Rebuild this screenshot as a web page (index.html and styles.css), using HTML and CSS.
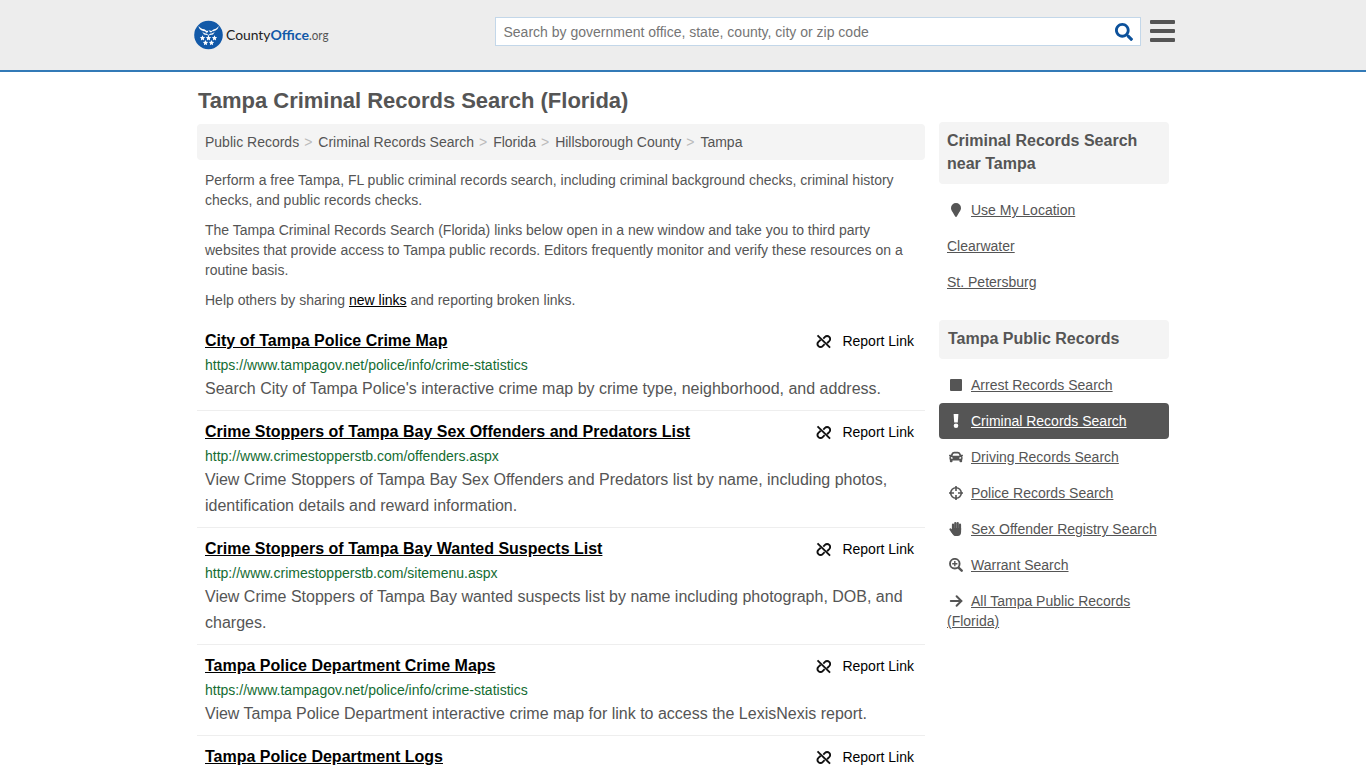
FILE: index.html
```html
<!DOCTYPE html>
<html lang="en">
<head>
<meta charset="utf-8">
<title>Tampa Criminal Records Search (Florida)</title>
<link rel="stylesheet" href="styles.css">
</head>
<body>
<svg width="0" height="0" class="defs">
  <symbol id="unlink" viewBox="0 0 16 16"><g fill="none" stroke="#111" stroke-width="2"><path d="M1.600 1.400 15 14.600"/><path d="M7.800 5 9.600 3.100a3.100 3.100 0 0 1 4.500 0 3.300 3.300 0 0 1 0 4.500L11.800 9.900M9.200 10.800l-2.100 2.100a3.100 3.100 0 0 1-4.500 0 3.300 3.300 0 0 1 0-4.500L5 6.100"/></g></symbol>
</svg>
<header class="header">
  <div class="header-inner">
    <a class="logo">
      <svg width="144" height="30" viewBox="0 0 144 30">
        <circle cx="14.500" cy="15" r="14.300" fill="#1259a8"/>
        <path fill="#fff" d="M4.500 6c.5 3.500 3.300 5 6.500 5.300l1.200 1.400 1.700-.5.3-1.700 1-.3.500 1.900 1.500.5 1.100-1.300c3.200-.3 5.900-1.800 6.400-5.300-1.400 2-2.900 2.900-4.800 3.300l-2.500 1.700-2.300-.8-2.200.8-2.600-1.700C7.800 8.900 6 7.900 4.500 6zM8 11.500c1.500 1.500 3 2 4.300 2l2.200 1.500 2.200-1.500c1.300 0 2.800-.5 4.300-2l-2 3-3.100.5-1.400.8-1.400-.8-3.100-.5z"/>
        <g fill="#fff">
          <path id="star" d="m8.500 15.300.8 1.700 1.900.3-1.400 1.300.3 1.900-1.600-.9-1.600.9.3-1.900-1.400-1.300 1.900-.3z"/>
          <use href="#star" x="6"/><use href="#star" x="12"/><use href="#star" x="3" y="4.700"/><use href="#star" x="9" y="4.700"/>
        </g>
        <g class="logo-text"><text x="32" y="20" textLength="44.500" lengthAdjust="spacingAndGlyphs" fill="#222">County</text><text class="logo-bold" x="76.500" y="20" textLength="38.500" lengthAdjust="spacingAndGlyphs">Office</text><text class="logo-org" x="115" y="20" textLength="19.500" lengthAdjust="spacingAndGlyphs">.org</text></g>
      </svg>
    </a>
    <div class="search">
      <span>Search by government office, state, county, city or zip code</span>
      <svg width="18" height="18" viewBox="0 0 512 512" fill="#0c519b"><path d="M505 442.700L405.300 343c-4.500-4.500-10.600-7-17-7H372c27.600-35.300 44-79.700 44-128C416 93.100 322.900 0 208 0S0 93.100 0 208s93.100 208 208 208c48.300 0 92.700-16.400 128-44v16.300c0 6.400 2.500 12.500 7 17l99.700 99.700c9.400 9.400 24.600 9.400 33.900 0l28.300-28.300c9.400-9.400 9.400-24.600.1-34zM208 336c-70.700 0-128-57.200-128-128 0-70.700 57.200-128 128-128 70.700 0 128 57.200 128 128 0 70.700-57.200 128-128 128z"/></svg>
    </div>
    <div class="menu"><i></i><i></i><i></i></div>
  </div>
</header>
<div class="page">
  <main class="main">
    <h1>Tampa Criminal Records Search (Florida)</h1>
    <nav class="crumbs"><a>Public Records</a><i>&gt;</i><a>Criminal Records Search</a><i>&gt;</i><a>Florida</a><i>&gt;</i><a>Hillsborough County</a><i>&gt;</i><a>Tampa</a></nav>
    <div class="intro">
      <p>Perform a free Tampa, FL public criminal records search, including criminal background checks, criminal history<br>checks, and public records checks.</p>
      <p>The Tampa Criminal Records Search (Florida) links below open in a new window and take you to third party<br>websites that provide access to Tampa public records. Editors frequently monitor and verify these resources on a<br>routine basis.</p>
      <p>Help others by sharing <a>new links</a> and reporting broken links.</p>
    </div>
    <section class="item">
      <div class="top"><h2>City of Tampa Police Crime Map</h2><a class="report"><svg width="15" height="15"><use href="#unlink"/></svg>Report Link</a></div>
      <div class="url">https://www.tampagov.net/police/info/crime-statistics</div>
      <div class="desc">Search City of Tampa Police's interactive crime map by crime type, neighborhood, and address.</div>
    </section>
    <section class="item">
      <div class="top"><h2>Crime Stoppers of Tampa Bay Sex Offenders and Predators List</h2><a class="report"><svg width="15" height="15"><use href="#unlink"/></svg>Report Link</a></div>
      <div class="url">http://www.crimestopperstb.com/offenders.aspx</div>
      <div class="desc">View Crime Stoppers of Tampa Bay Sex Offenders and Predators list by name, including photos,<br>identification details and reward information.</div>
    </section>
    <section class="item">
      <div class="top"><h2>Crime Stoppers of Tampa Bay Wanted Suspects List</h2><a class="report"><svg width="15" height="15"><use href="#unlink"/></svg>Report Link</a></div>
      <div class="url">http://www.crimestopperstb.com/sitemenu.aspx</div>
      <div class="desc">View Crime Stoppers of Tampa Bay wanted suspects list by name including photograph, DOB, and<br>charges.</div>
    </section>
    <section class="item">
      <div class="top"><h2>Tampa Police Department Crime Maps</h2><a class="report"><svg width="15" height="15"><use href="#unlink"/></svg>Report Link</a></div>
      <div class="url">https://www.tampagov.net/police/info/crime-statistics</div>
      <div class="desc">View Tampa Police Department interactive crime map for link to access the LexisNexis report.</div>
    </section>
    <section class="item">
      <div class="top"><h2>Tampa Police Department Logs</h2><a class="report"><svg width="15" height="15"><use href="#unlink"/></svg>Report Link</a></div>
    </section>
  </main>
  <aside class="side">
    <h3>Criminal Records Search<br>near Tampa</h3>
    <ul>
      <li><svg class="ico" viewBox="0 0 18 14"><path d="M9 0a5 5 0 0 1 5 5c0 2.200-1.300 3.400-4.200 8.400a.9.9 0 0 1-1.600 0C5.300 8.400 4 7.200 4 5a5 5 0 0 1 5-5z"/></svg><a>Use My Location</a></li>
      <li><a>Clearwater</a></li>
      <li><a>St. Petersburg</a></li>
    </ul>
    <h3 class="second">Tampa Public Records</h3>
    <ul>
      <li><svg class="ico" viewBox="0 0 18 14"><rect x="3" y="1" width="12" height="12" rx="1"/></svg><a>Arrest Records Search</a></li>
      <li class="active"><svg class="ico" viewBox="0 0 18 14"><path d="M6.600 0h4.800l-.6 8.500H7.200z"/><circle cx="9" cy="11.700" r="2.300"/></svg><a>Criminal Records Search</a></li>
      <li><svg class="ico" viewBox="-73 0 658 512"><path d="M499.990 176h-59.870l-16.640-41.600C406.380 91.630 365.570 64 319.500 64h-127c-46.060 0-86.880 27.630-103.990 70.400L71.870 176H12.010C4.200 176-1.530 183.340.37 190.910l6 24C7.700 220.250 12.500 224 18.010 224h20.070C24.650 235.730 16 252.780 16 272v48c0 16.120 6.160 30.670 16 41.930V416c0 17.670 14.330 32 32 32h32c17.670 0 32-14.330 32-32v-32h256v32c0 17.670 14.330 32 32 32h32c17.670 0 32-14.330 32-32v-54.070c9.840-11.250 16-25.800 16-41.930v-48c0-19.220-8.650-36.270-22.070-48H494c5.510 0 10.310-3.750 11.640-9.090l6-24c1.890-7.570-3.840-14.910-11.650-14.910zm-352.060-17.830c7.290-18.220 24.940-30.170 44.570-30.170h127c19.630 0 37.280 11.950 44.570 30.170L384 208H128l19.930-49.830zM96 319.800c-19.200 0-32-12.760-32-31.900S76.800 256 96 256s48 28.710 48 47.850-28.800 15.950-48 15.950zm320 0c-19.200 0-48 3.190-48-15.950S396.800 256 416 256s32 12.760 32 31.900-12.800 31.900-32 31.900z"/></svg><a>Driving Records Search</a></li>
      <li><svg class="ico" viewBox="0 0 18 14"><g fill="none" stroke="#555" stroke-width="1.600"><circle cx="9" cy="7" r="5.300"/><path d="M9 0v5M9 9v5M2 7h5M11 7H16"/></g></svg><a>Police Records Search</a></li>
      <li><svg class="ico" viewBox="0 0 18 14"><path stroke="#555" stroke-width="2.200" stroke-linecap="round" d="M6 7.500V2.600M8.300 7V1.100M10.700 7V1.100M13 8V2.700M3.500 7.300l2.700 3.500"/><path d="M5.200 6h8.900v4c0 2.500-1.200 4-3.500 4H8.500c-1.300 0-2-.7-2.800-1.800L3.600 9l1.600.3z"/></svg><a>Sex Offender Registry Search</a></li>
      <li><svg class="ico" viewBox="0 0 18 14"><g fill="none" stroke="#555"><circle cx="7.800" cy="5.700" r="4.800" stroke-width="1.900"/><path stroke-width="2.400" stroke-linecap="round" d="m11.800 9.800 2.900 2.900"/><path stroke-width="1.400" d="M5.200 5.700h5.200M7.800 3.100v5.200"/></g></svg><a>Warrant Search</a></li>
      <li><svg class="ico" viewBox="0 0 18 14"><path fill="none" stroke="#555" stroke-width="2" stroke-linecap="round" d="M3.800 7h10.200M9.600 2.200 14.400 7l-4.800 4.800"/></svg><a>All Tampa Public Records<br>(Florida)</a></li>
    </ul>
  </aside>
</div>
</body>
</html>
```
FILE: styles.css
```css
* { box-sizing: border-box; }
html { overflow: hidden; }
body { margin: 0; background: #fff; color: #555; font: 14px/20px "Liberation Sans", Arial, sans-serif; height: 768px; overflow: hidden; }
.defs { display: none; }
.header { height: 72px; background: #ededed; border-bottom: 2px solid #337ab7; }
.header-inner { width: 981px; margin-left: 194px; display: flex; align-items: flex-start; }
.logo { width: 301px; padding-top: 20px; }
.logo svg, .search svg { display: block; }
.logo svg { overflow: visible; }
.logo-text { font: 13.5px Lato, sans-serif; }
.logo-bold { font-weight: 700; fill: #1259a8; }
.logo-org { fill: #555; }
.search { width: 646px; height: 29px; margin-top: 17px; padding: 0 7px 0 7.5px; background: #fff; border: 1px solid #c3d7e9; display: flex; align-items: center; justify-content: space-between; color: #757575; }
.menu { width: 25px; margin: 20px 0 0 9px; display: grid; gap: 5px; }
.menu i { height: 4px; background: #555; border-radius: 1px; }
.page { width: 972px; margin-left: 197px; display: flex; gap: 14px; align-items: flex-start; }
.main { width: 728px; }
h1 { margin: 0; padding: 16px 0 11px 1px; font-size: 22px; line-height: 25px; letter-spacing: -0.02px; white-space: nowrap; }
.crumbs { height: 36px; padding: 8px; background: #f4f4f4; border-radius: 4px; white-space: nowrap; }
.crumbs i { padding: 0 6px 0 5px; font-style: normal; color: #bbb; }
.intro { padding: 10px 0 0 8px; white-space: nowrap; }
.intro p { margin: 0 0 10px; }
.intro a { color: #000; text-decoration: underline; }
.item { padding: 8px 11px 8px 8px; border-bottom: 1px solid #eee; white-space: nowrap; }
.top { display: flex; justify-content: space-between; height: 27px; }
h2 { margin: 0; font-size: 16px; line-height: 25px; color: #000; text-decoration: underline; }
.report { display: flex; align-items: center; gap: 11px; height: 26px; color: #000; }
.url { color: #146c32; padding-bottom: 1px; }
.desc { font-size: 16px; line-height: 26px; }
.side { width: 230px; padding-top: 50px; }
h3 { margin: 0 0 8px; padding: 7px 8px 9px; font-size: 16px; line-height: 23px; background: #f4f4f4; border-radius: 4px; white-space: nowrap; }
.second { margin-top: 20px; padding-left: 9px; }
ul { margin: 0; padding: 0; list-style: none; }
li { padding: 8px; border-radius: 4px; white-space: nowrap; }
li a { text-decoration: underline; }
.ico { width: 18px; height: 14px; margin-right: 6px; vertical-align: -2px; fill: #555; }
.active { background: #555; color: #fff; }
.active .ico { fill: #fff; }
```
